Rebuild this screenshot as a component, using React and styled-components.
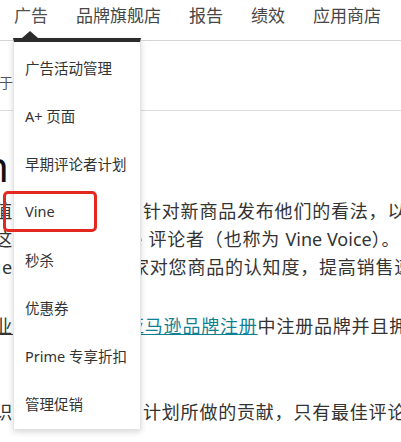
import React from "react"
import styled, { createGlobalStyle } from "styled-components"

const GlobalStyle = createGlobalStyle`
  body {
    margin: 0;
    background: #fff;
    font-family: "Noto Sans", "Noto Sans CJK SC", sans-serif;
  }
`

const Page = styled.div`
  position: relative;
  width: 401px;
  height: 442px;
  overflow: hidden;
  background: #fff;
`

const Nav = styled.nav`
  display: flex;
  gap: 28px;
  height: 41px;
  padding: 4px 0 0 14px;
  box-sizing: border-box;
  border-bottom: 1px solid #d6d6d6;
`

const NavItem = styled.span`
  font-size: 17px;
  line-height: 24px;
  color: ${p => (p.$active ? "#505050" : "#464646")};
  white-space: nowrap;
`

const Content = styled.div`
  color: #333;
`

const Line = styled.div`
  display: flex;
  white-space: nowrap;
  font-size: ${p => p.$size || 18}px;
  line-height: ${p => p.$lh || 28}px;
  letter-spacing: ${p => (p.$size ? 0 : 0.8)}px;
  margin-top: ${p => p.$mt || 0}px;
  color: ${p => p.$color || "#333"};
`

const Lead = styled.span`
  display: flex;
  justify-content: flex-end;
  flex: 0 0 13px;
  overflow: hidden;
  padding-right: ${p => p.$pr || 0}px;
  box-sizing: border-box;
  text-decoration: ${p => (p.$under ? "underline" : "none")};
`

/* text that sits behind the open menu */
const Hidden = styled.span`
  flex: 0 0 128px;
  overflow: hidden;
  visibility: hidden;
`

const Tail = styled.span`
  flex: 1;
  overflow: hidden;
  text-indent: ${p => p.$indent || 0}px;
`

const Latin = styled.span`
  letter-spacing: 0;
`

const Link = styled.span`
  color: #0f7f93;
  text-decoration: underline;
`

const Rule = styled.div`
  height: 1px;
  background: #dcdcdc;
  margin-top: 17px;
`

const Menu = styled.ul`
  position: absolute;
  top: 38px;
  left: 13px;
  width: 128px;
  height: 391px;
  margin: 0;
  padding: 1px 0 0;
  box-sizing: border-box;
  list-style: none;
  background: #fff;
  border-top: 4px solid #2b2b2b;
  border-left: 1px solid #e4e4e4;
  border-right: 1px solid #e4e4e4;
  box-shadow: 0 3px 6px rgba(0, 0, 0, 0.16);
  &::before {
    content: "";
    position: absolute;
    left: 8px;
    top: -11px;
    border-left: 8px solid transparent;
    border-right: 8px solid transparent;
    border-bottom: 7px solid #2b2b2b;
  }
`

const MenuItem = styled.li`
  display: flex;
  align-items: center;
  height: 48px;
  padding-left: 11px;
  font-size: 14.5px;
  color: #333;
  white-space: nowrap;
`

const Highlight = styled.div`
  position: absolute;
  left: 3px;
  top: 191px;
  width: 94px;
  height: 41px;
  box-sizing: border-box;
  border: 3px solid #e3281f;
  border-radius: 5px;
`

const navItems = ["广告", "品牌旗舰店", "报告", "绩效", "应用商店"]
const menuItems = [
  "广告活动管理",
  "A+ 页面",
  "早期评论者计划",
  "Vine",
  "秒杀",
  "优惠券",
  "Prime 专享折扣",
  "管理促销",
]

const App = () => {
  return (
    <Page>
      <GlobalStyle />
      <Nav>
        {navItems.map((n, i) => (
          <NavItem key={n} $active={i === 0}>
            {n}
          </NavItem>
        ))}
      </Nav>
      <Content>
        <Line $size={14} $lh={20} $mt={32} $color="#555">
          <Lead>关于</Lead>
          <Hidden>Vine</Hidden>
        </Line>
        <Rule />
        <Line $size={42} $lh={50} $mt={30} $color="#111">
          <Lead $pr={4}>Amazon</Lead>
          <Hidden>&nbsp;Vine</Hidden>
        </Line>
        <Line $mt={6}>
          <Lead>上最值</Lead>
          <Hidden>得信赖的评论者</Hidden>
          <Tail $indent={2}>针对新商品发布他们的看法，以帮助其他买家</Tail>
        </Line>
        <Line>
          <Lead>这</Lead>
          <Hidden>些用户即为 Vin</Hidden>
          <Tail $indent={-9}>
            e 评论者（也称为 <Latin>Vine Voice</Latin>）。
          </Tail>
        </Line>
        <Line>
          <Lead>Vine</Lead>
          <Hidden>可以帮助提高买</Hidden>
          <Tail $indent={-10}>家对您商品的认知度，提高销售速度</Tail>
        </Line>
        <Line $mt={31}>
          <Lead $under>专业</Lead>
          <Hidden>卖家已在</Hidden>
          <Tail $indent={-15}>
            <Link>亚马逊品牌注册</Link>中注册品牌并且拥有
          </Tail>
        </Line>
        <Line $mt={58}>
          <Lead>识</Lead>
          <Hidden>评论者对 Vine</Hidden>
          <Tail $indent={2}>计划所做的贡献，只有最佳评论者</Tail>
        </Line>
      </Content>
      <Menu>
        {menuItems.map(m => (
          <MenuItem key={m}>{m}</MenuItem>
        ))}
      </Menu>
      <Highlight />
    </Page>
  )
}

export default App
